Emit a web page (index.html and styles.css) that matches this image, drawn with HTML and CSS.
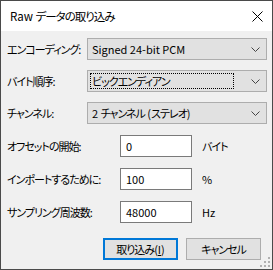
FILE: index.html
```html
<!DOCTYPE html>
<html lang="ja">
<head>
<meta charset="utf-8">
<link rel="stylesheet" href="styles.css">
</head>
<body>
<div class="window">
  <div class="titlebar">
    <span class="title">Raw <span class="ja">データの取り込み</span></span>
    <svg class="close" width="11" height="11" viewBox="0 0 11 11"><path d="M0.5 0.5 L10.5 10.5 M10.5 0.5 L0.5 10.5" stroke="#000" stroke-width="1" fill="none"/></svg>
  </div>
  <div class="body">
    <div class="combos">
      <span class="label ja">エンコーディング:</span>
      <div class="combo"><span class="val">Signed 24-bit PCM</span><svg class="chev" width="9" height="5" viewBox="0 0 9 5"><path d="M0.5 0.5 L4.5 4.5 L8.5 0.5" stroke="#444" fill="none"/></svg></div>
      <span class="label ja">バイト順序:</span>
      <div class="combo"><span class="val focus ja">ビックエンディアン</span><svg class="chev" width="9" height="5" viewBox="0 0 9 5"><path d="M0.5 0.5 L4.5 4.5 L8.5 0.5" stroke="#444" fill="none"/></svg></div>
      <span class="label ja">チャンネル:</span>
      <div class="combo"><span class="val">2 <span class="ja">チャンネル</span> (<span class="ja">ステレオ</span>)</span><svg class="chev" width="9" height="5" viewBox="0 0 9 5"><path d="M0.5 0.5 L4.5 4.5 L8.5 0.5" stroke="#444" fill="none"/></svg></div>
    </div>
    <div class="fields">
      <span class="label ja">オフセットの開始:</span><div class="input">0</div><span class="unit ja">バイト</span>
      <span class="label ja">インポートするために:</span><div class="input">100</div><span class="unit">%</span>
      <span class="label ja">サンプリング周波数:</span><div class="input">48000</div><span class="unit">Hz</span>
    </div>
    <div class="buttons">
      <button class="btn default"><span class="ja">取り込み</span>(<u>I</u>)</button>
      <button class="btn"><span class="ja">キャンセル</span></button>
    </div>
    <svg class="grip" width="10" height="10" viewBox="0 0 10 10">
      <rect x="8" y="0" width="2" height="2" fill="#b0b0b0"/>
      <rect x="4" y="4" width="2" height="2" fill="#b0b0b0"/>
      <rect x="8" y="4" width="2" height="2" fill="#b0b0b0"/>
      <rect x="0" y="8" width="2" height="2" fill="#b0b0b0"/>
      <rect x="4" y="8" width="2" height="2" fill="#b0b0b0"/>
      <rect x="8" y="8" width="2" height="2" fill="#b0b0b0"/>
    </svg>
  </div>
</div>
</body>
</html>
```
FILE: styles.css
```css
html, body {
  margin: 0;
  padding: 0;
  background: #f0f0f0;
}
body {
  font-family: "Noto Sans CJK JP", "Noto Sans", sans-serif;
  font-size: 11px;
  font-feature-settings: "palt";
  color: #000;
}
.ja {
  letter-spacing: -1px;
}
.window {
  width: 273px;
  height: 270px;
  box-sizing: border-box;
  border: 1px solid #4a4a4a;
  display: flex;
  flex-direction: column;
  background: #f0f0f0;
}
.titlebar {
  height: 30px;
  background: #fff;
  display: flex;
  align-items: center;
  justify-content: space-between;
  padding: 0 9px 0 9px;
  flex: none;
}
.title {
  font-size: 11.5px;
  line-height: 14px;
}
.close {
  display: block;
}
.body {
  flex: 1;
  position: relative;
  padding: 7px 5px 0 6px;
}
.combos {
  display: grid;
  grid-template-columns: 80px 180px;
  row-gap: 10px;
  align-items: center;
}
.label {
  line-height: 14px;
  white-space: nowrap;
}
.combo {
  height: 22px;
  box-sizing: border-box;
  border: 1px solid #adadad;
  background: #e1e1e1;
  display: flex;
  align-items: center;
  padding: 2px 0 2px 2px;
}
.val {
  flex: 1;
  align-self: stretch;
  display: flex;
  align-items: center;
  padding-left: 1px;
  margin-right: 17px;
  border: 1px solid transparent;
  white-space: pre;
  line-height: 14px;
}
.val.focus {
  border: 1px dotted #000;
}
.chev {
  display: block;
  margin-right: 6px;
}
.fields {
  margin-top: 11px;
  display: grid;
  grid-template-columns: 103px 72px auto;
  column-gap: 10px;
  row-gap: 11px;
  align-items: center;
}
.input {
  height: 22px;
  box-sizing: border-box;
  border: 1px solid #7a7a7a;
  background: #fff;
  display: flex;
  align-items: center;
  padding-left: 5px;
  line-height: 14px;
}
.unit {
  line-height: 14px;
}
.buttons {
  margin-top: 15px;
  margin-right: 6px;
  display: flex;
  justify-content: flex-end;
  gap: 8px;
}
.btn {
  width: 75px;
  height: 22px;
  box-sizing: border-box;
  border: 1px solid #adadad;
  background: #e1e1e1;
  font: inherit;
  font-feature-settings: "palt";
  color: #000;
  padding: 0;
  line-height: 14px;
}
.btn.default {
  border: 2px solid #0078d7;
}
.grip {
  position: absolute;
  right: 2px;
  bottom: 2px;
  display: block;
}
```
